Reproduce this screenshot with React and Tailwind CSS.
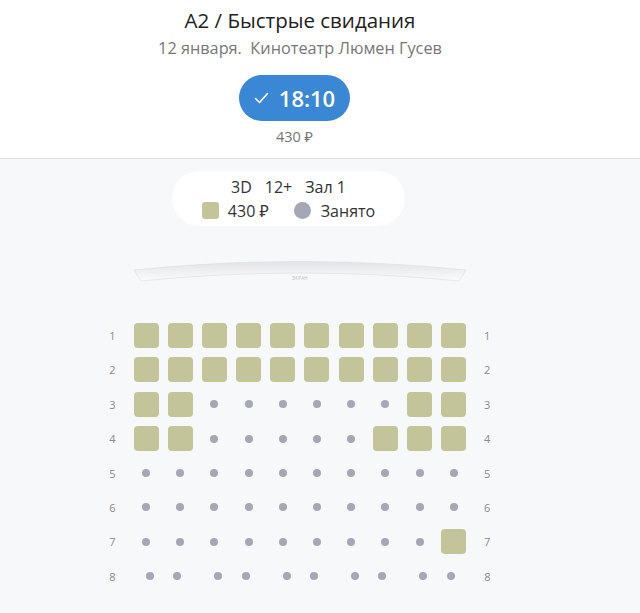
import React from "react";

const S = "s";
const D = "d";
const rows = [
  [S, S, S, S, S, S, S, S, S, S],
  [S, S, S, S, S, S, S, S, S, S],
  [S, S, D, D, D, D, D, D, S, S],
  [S, S, D, D, D, D, D, S, S, S],
  [D, D, D, D, D, D, D, D, D, D],
  [D, D, D, D, D, D, D, D, D, D],
  [D, D, D, D, D, D, D, D, D, S],
];

function Cell({ t }) {
  return (
    <div className="w-[25px] h-[25px] flex items-center justify-center">
      {t === S ? (
        <div className="w-[25px] h-[25px] rounded-[4px] bg-[#c4c49b]" />
      ) : (
        <div className="w-[8px] h-[8px] rounded-full bg-[#a6a7b4]" />
      )}
    </div>
  );
}

function Label({ n }) {
  return (
    <div className="w-[42px] text-center text-[11px] leading-[25px] text-[#8a8a8a]">{n}</div>
  );
}

function Dot({ cls }) {
  return <div className={"w-[8px] h-[8px] rounded-full bg-[#a6a7b4] " + cls} />;
}

export default function App() {
  return (
    <div
      className="w-full min-h-screen bg-[#f7f8fa]"
      style={{ fontFamily: '"Open Sans", "Noto Sans", sans-serif' }}
    >
      <div className="bg-white border-b border-[#dcdcdc]">
        <div className="w-[600px] flex flex-col items-center pt-[6px] pb-[11px]">
          <div className="text-[20.5px] leading-[28px] text-[#222]">A2 / Быстрые свидания</div>
          <div className="mt-[2px] text-[16.3px] leading-[24px] text-[#777]">
            12 января.&nbsp; Кинотеатр Люмен Гусев
          </div>
          <div className="mt-[15px] mr-[11px] w-[111px] h-[46px] rounded-full bg-[#3a87d6] flex items-center justify-center gap-[10px] text-white">
            <svg width="15" height="12" viewBox="0 0 15 12" fill="none">
              <path d="M1.5 6.5 L5.5 10.5 L13.5 1.5" stroke="white" strokeWidth="1.6" strokeLinecap="round" strokeLinejoin="round" />
            </svg>
            <span className="text-[22px] leading-[28px] font-semibold">18:10</span>
          </div>
          <div className="mt-[6px] mr-[11px] text-[14.5px] leading-[20px] text-[#777]">430 ₽</div>
        </div>
      </div>

      <div className="w-[600px] flex flex-col items-center">
        <div className="mt-[12px] mr-[23px] px-[30px] h-[55px] rounded-[28px] bg-white flex flex-col items-center justify-center text-[#333]">
          <div className="text-[16px] leading-[22px] flex gap-[13px]">
            <span>3D</span>
            <span>12+</span>
            <span>Зал 1</span>
          </div>
          <div className="mt-[2px] text-[16px] leading-[22px] flex items-center">
            <div className="w-[17px] h-[17px] rounded-[3px] bg-[#c4c49b]" />
            <span className="ml-[9px]">430 ₽</span>
            <div className="ml-[25px] w-[17px] h-[17px] rounded-full bg-[#a6a7b4]" />
            <span className="ml-[10px]">Занято</span>
          </div>
        </div>

        <svg className="mt-[33px]" width="334" height="28" viewBox="0 0 334 28">
          <defs>
            <linearGradient id="g" x1="0" y1="0" x2="0" y2="1">
              <stop offset="0" stopColor="#e4e4e8" />
              <stop offset="1" stopColor="#fbfbfc" />
            </linearGradient>
          </defs>
          <path
            d="M1 11 Q167 -6 333 11 L326 22 Q167 6 8 22 Z"
            fill="url(#g)"
            stroke="#dcdce0"
            strokeWidth="0.6"
          />
          <text x="167" y="21" textAnchor="middle" fontSize="4.5" fill="#b8b8bc" letterSpacing="0.3">ЭКРАН</text>
        </svg>

        <div className="mt-[36px] flex flex-col gap-[9.4px]">
          {rows.map((r, i) => (
            <div key={i} className="flex items-center">
              <Label n={i + 1} />
              <div className="flex gap-[9.2px]">
                {r.map((t, j) => (
                  <Cell key={j} t={t} />
                ))}
              </div>
              <Label n={i + 1} />
            </div>
          ))}
          <div className="flex items-center">
            <Label n={8} />
            <div className="w-[333px] h-[25px] flex items-center">
              <Dot cls="ml-[12px]" />
              <Dot cls="ml-[19px]" />
              <Dot cls="ml-[33px]" />
              <Dot cls="ml-[20px]" />
              <Dot cls="ml-[33px]" />
              <Dot cls="ml-[19px]" />
              <Dot cls="ml-[33px]" />
              <Dot cls="ml-[19px]" />
              <Dot cls="ml-[33px]" />
              <Dot cls="ml-[20px]" />
            </div>
            <Label n={8} />
          </div>
        </div>
      </div>
    </div>
  );
}
